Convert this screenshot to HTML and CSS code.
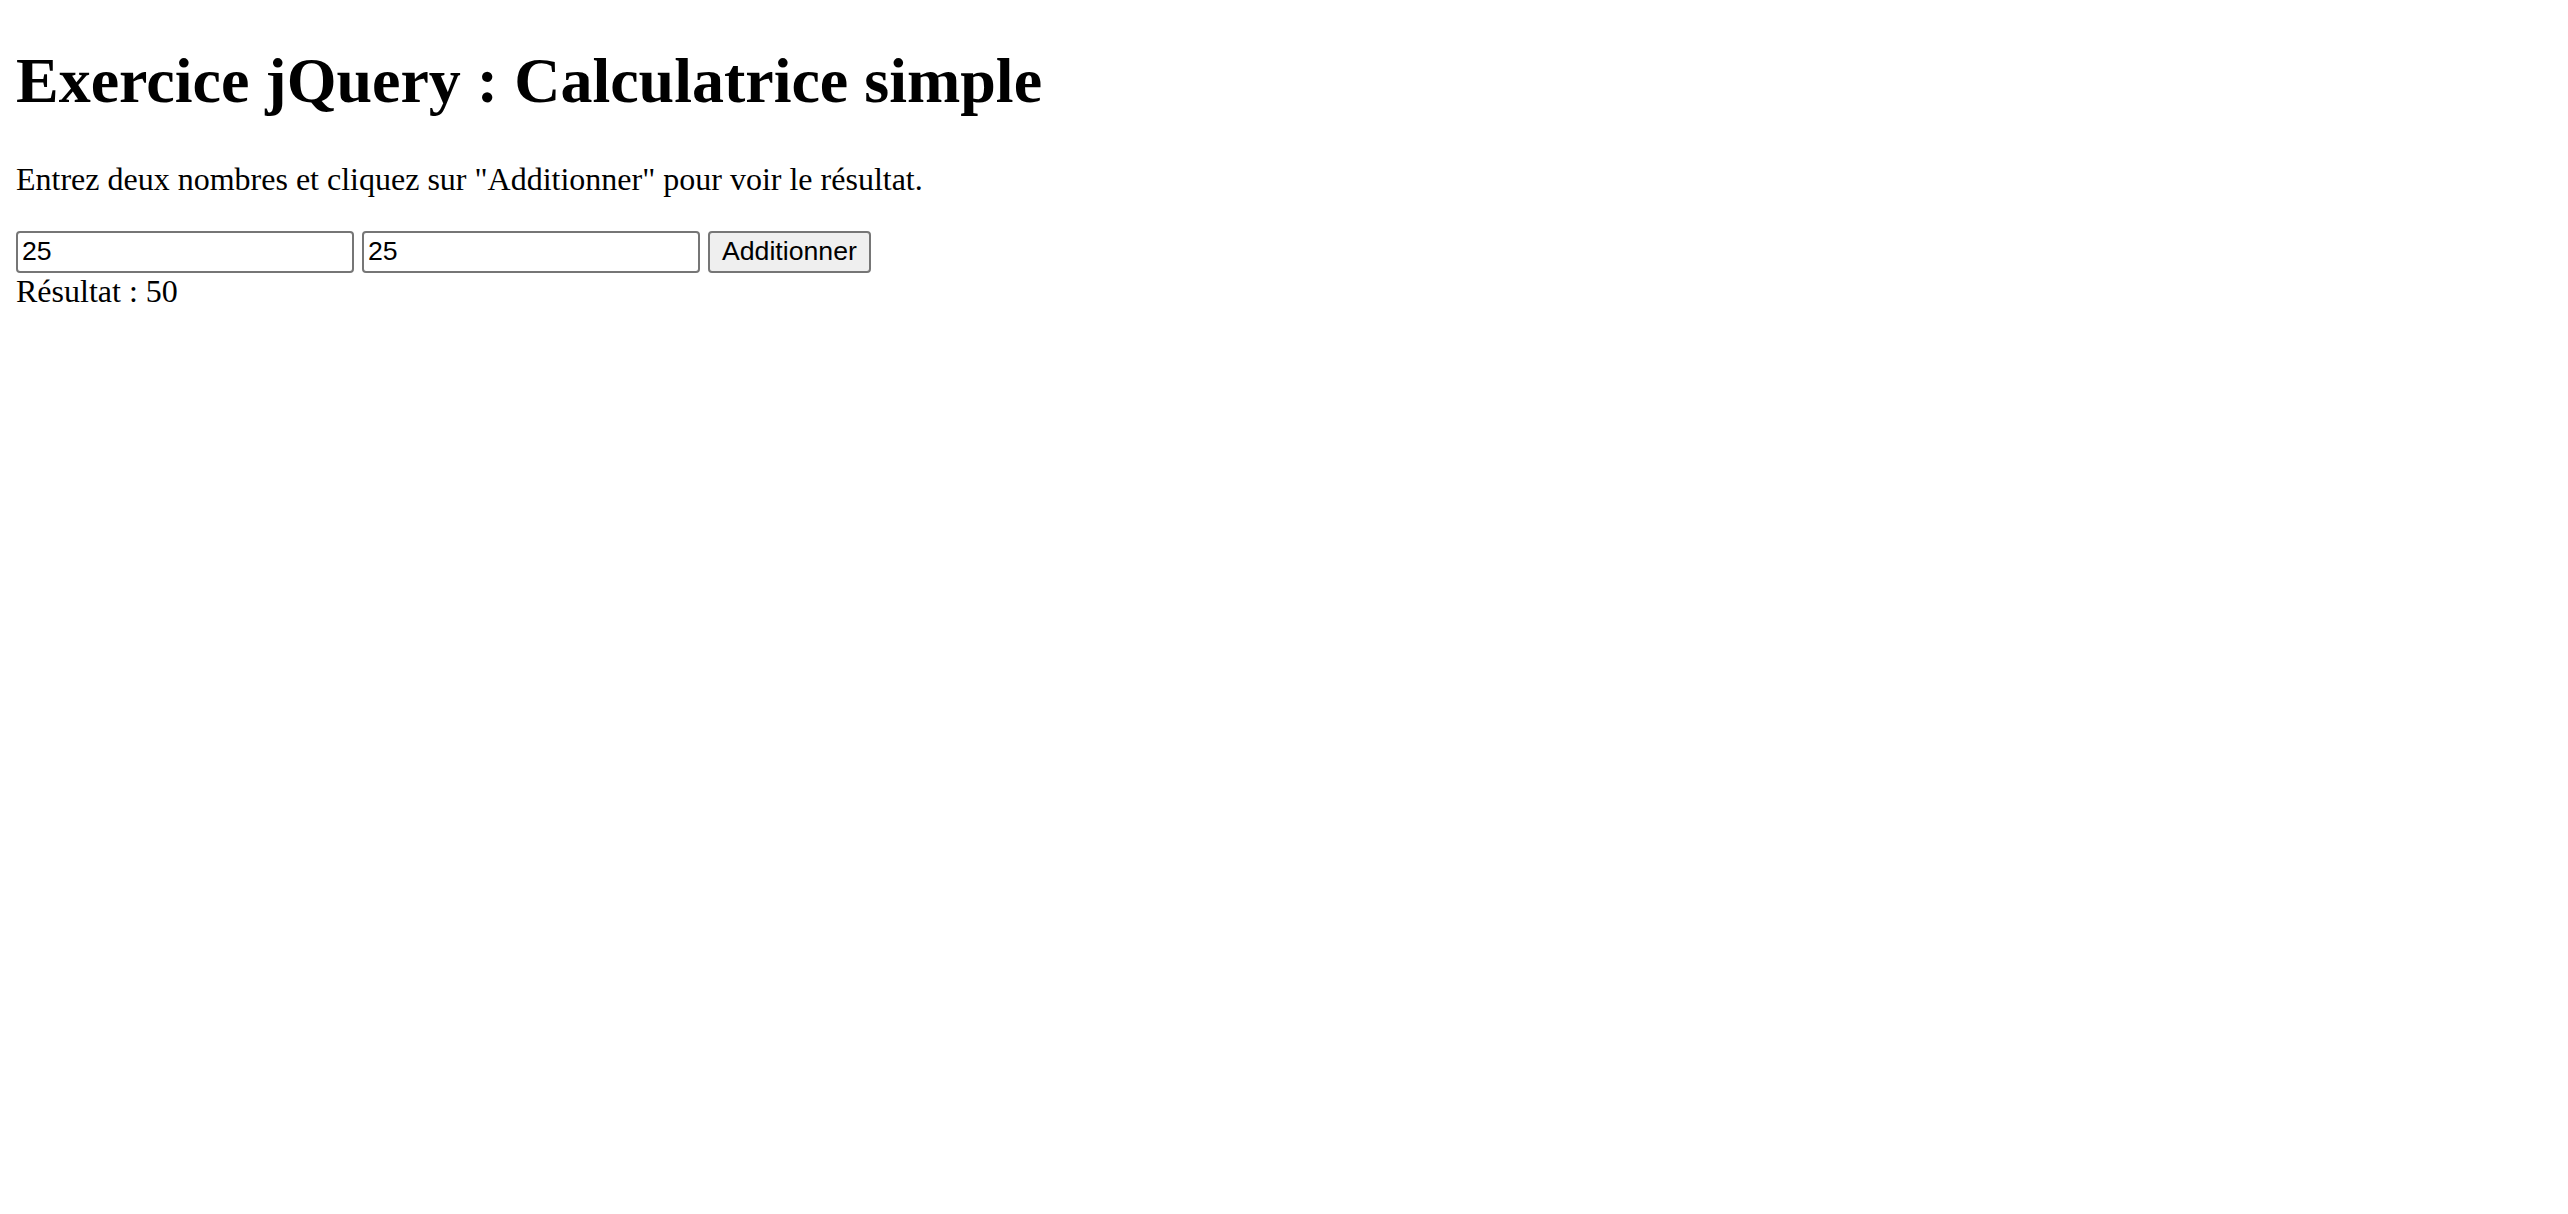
FILE: index.html
```html
<!DOCTYPE html>
<html lang="fr">
<head>
<meta charset="utf-8">
<title>Calculatrice simple</title>
<link rel="stylesheet" href="styles.css">
</head>
<body class="page">
<h1 class="title">Exercice jQuery : Calculatrice simple</h1>
<p class="intro">Entrez deux nombres et cliquez sur "Additionner" pour voir le résultat.</p>
<div class="form"><input class="num" type="text" value="25"> <input class="num" type="text" value="25"> <button class="btn" type="button">Additionner</button></div>
<div class="result">Résultat : 50</div>
</body>
</html>
```
FILE: styles.css
```css
html, body { background: #fff; }
.page {
  margin: 16px;
  font-family: "Liberation Serif", "Times New Roman", serif;
  font-size: 32px;
  color: #000;
}
.title {
  font-size: 64px;
  font-weight: bold;
  margin: 28px 0 42.88px;
}
.intro {
  margin: 32px 0;
}
.form {
  line-height: normal;
}
.num {
  font-family: "Liberation Sans", Arial, sans-serif;
  font-size: 26.67px;
  width: 338px;
  height: 42px;
  box-sizing: border-box;
  padding: 2px 4px;
  border: 2px solid #767676;
  border-radius: 4px;
  margin: 0;
  vertical-align: middle;
  color: #000;
}
.btn {
  font-family: "Liberation Sans", Arial, sans-serif;
  font-size: 26.67px;
  height: 42px;
  box-sizing: border-box;
  padding: 2px 12px;
  border: 2px solid #767676;
  border-radius: 4px;
  background: #efefef;
  margin: 0;
  vertical-align: middle;
  color: #000;
}
.result {
  margin: 0;
}
```
